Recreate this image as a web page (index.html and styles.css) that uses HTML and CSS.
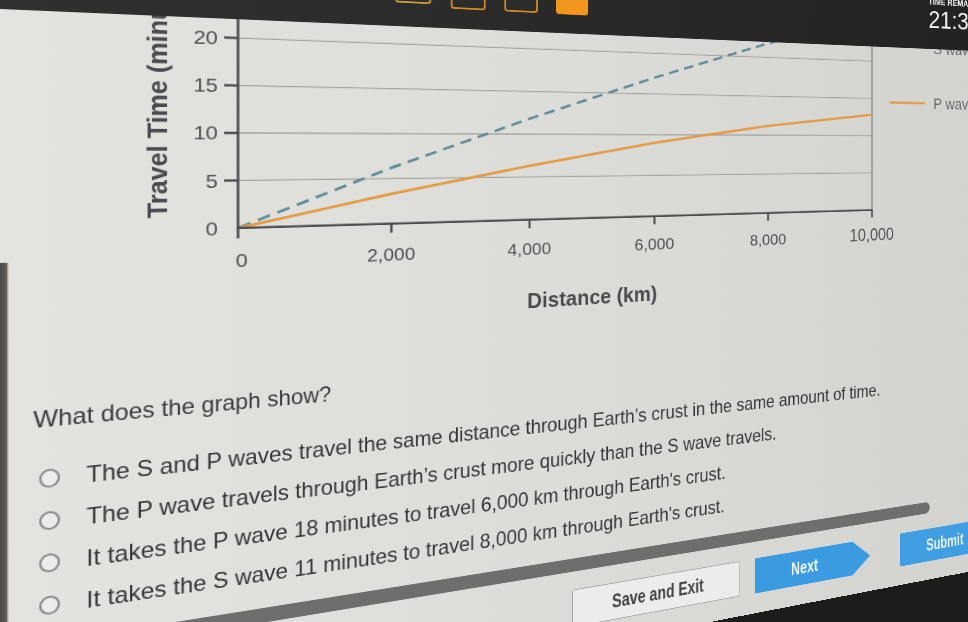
FILE: index.html
```html
<!DOCTYPE html>
<html lang="en">
<head>
<meta charset="utf-8">
<title>Travel time question</title>
<link rel="stylesheet" href="styles.css">
</head>
<body>
<div class="scene">
  <div class="page">
    <header class="topbar">
      <nav class="qnav">
        <span class="qbox qbox-first"></span>
        <span class="qbox"></span>
        <span class="qbox"></span>
        <span class="qbox qbox-current"></span>
      </nav>
      <div class="timer">
        <div class="timer-label">TIME REMAINING</div>
        <div class="timer-value">21:38</div>
      </div>
    </header>
    <main class="content">
      <svg class="chart" width="1200" height="357" viewBox="0 9 1200 357">
        <g class="grid">
          <line x1="214.5" y1="-22" x2="1003" y2="-22"/>
          <line x1="214.5" y1="29.3" x2="1003" y2="29.3"/>
          <line x1="214.5" y1="80.65" x2="1003" y2="80.65"/>
          <line x1="214.5" y1="132" x2="1003" y2="132"/>
          <line x1="214.5" y1="183.35" x2="1003" y2="183.35"/>
        </g>
        <line class="frame" x1="1003" y1="-30" x2="1003" y2="234.7"/>
        <polyline class="s-wave" points="214.5,234.7 372.2,171 529.9,113.5 687.6,60.1 845.3,10.8 1003,-27"/>
        <polyline class="p-wave" points="214.5,234.7 372.2,200.8 529.9,170 687.6,142.3 845.3,119.7 1003,103.2"/>
        <g class="axis">
          <line x1="214.5" y1="-30" x2="214.5" y2="246"/>
          <line x1="213" y1="234.7" x2="1004" y2="234.7"/>
          <line x1="201" y1="29.3" x2="214.5" y2="29.3"/>
          <line x1="201" y1="80.65" x2="214.5" y2="80.65"/>
          <line x1="201" y1="132" x2="214.5" y2="132"/>
          <line x1="201" y1="183.35" x2="214.5" y2="183.35"/>
          <line x1="372.2" y1="234.7" x2="372.2" y2="245"/>
          <line x1="529.9" y1="234.7" x2="529.9" y2="245"/>
          <line x1="687.6" y1="234.7" x2="687.6" y2="245"/>
          <line x1="845.3" y1="234.7" x2="845.3" y2="245"/>
          <line x1="1003" y1="234.7" x2="1003" y2="245"/>
        </g>
        <g class="tick-y">
          <text x="195" y="36.8">20</text>
          <text x="195" y="88.15">15</text>
          <text x="195" y="139.5">10</text>
          <text x="195" y="190.85">5</text>
          <text x="195" y="242.2">0</text>
        </g>
        <g class="tick-x">
          <text x="218" y="277.5">0</text>
          <text x="372.2" y="277.5">2,000</text>
          <text x="529.9" y="277.5">4,000</text>
          <text x="687.6" y="277.5">6,000</text>
          <text x="845.3" y="277.5">8,000</text>
          <text class="tick-wide" x="1003" y="277.5">10,000</text>
        </g>
        <text class="axis-title" x="609" y="341" text-anchor="middle">Distance (km)</text>
        <text class="axis-title axis-title-y" transform="translate(147 222) rotate(-90)">Travel Time (minutes)</text>
        <g class="legend">
          <line class="s-wave" x1="1031" y1="4" x2="1089" y2="4"/>
          <text x="1103" y="16">S wave</text>
          <line class="p-wave" x1="1031" y1="86" x2="1089" y2="86"/>
          <text x="1103" y="94">P wave</text>
        </g>
      </svg>
      <p class="question"><span class="narrow">What does the graph show?</span></p>
      <ul class="options">
        <li class="option"><span class="radio"></span><span class="option-text">The S and P waves travel the same distance through Earth’s crust in the same amount of time.</span></li>
        <li class="option"><span class="radio"></span><span class="option-text">The P wave travels through Earth’s crust more quickly than the S wave travels.</span></li>
        <li class="option"><span class="radio"></span><span class="option-text">It takes the P wave 18 minutes to travel 6,000 km through Earth's crust.</span></li>
        <li class="option"><span class="radio"></span><span class="option-text">It takes the S wave 11 minutes to travel 8,000 km through Earth's crust.</span></li>
      </ul>
      <div class="divider"></div>
      <div class="actions">
        <button class="btn btn-save"><span class="btn-label">Save and Exit</span></button>
        <button class="btn btn-next"><span class="btn-label">Next</span></button>
        <button class="btn btn-submit"><span class="btn-label">Submit</span></button>
      </div>
    </main>
  </div>
</div>
</body>
</html>
```
FILE: styles.css
```css
* { box-sizing: border-box; }

html, body {
  margin: 0;
  padding: 0;
}

body {
  width: 968px;
  height: 622px;
  overflow: hidden;
  background: #1c1c1c;
  font-family: "Liberation Sans", Arial, sans-serif;
}

.scene {
  width: 968px;
  height: 622px;
  overflow: hidden;
  background: #1c1c1c;
  perspective: 1152px;
  perspective-origin: 0 145px;
}

.page {
  width: 1200px;
  margin-top: -150px;
  display: flex;
  flex-direction: column;
  transform-origin: 0 0;
  transform: rotateY(20deg) scaleX(1.277);
}

/* ---------- top bar ---------- */
.topbar {
  height: 159px;
  background: linear-gradient(90deg, #303030, #222222);
  display: flex;
  align-items: flex-end;
  padding-bottom: 23px;
}

.qnav {
  display: flex;
  gap: 22px;
  margin-left: 376px;
}

.qbox {
  width: 40px;
  height: 36px;
  border: 2px solid #d98a22;
  border-radius: 4px;
  background: #2c2c2c;
}

.qbox-first {
  border-color: #c9a23a;
  height: 32px;
  margin-bottom: 4px;
}

.qbox-current {
  background: #f2951c;
  border-color: #f2951c;
}

.timer {
  margin-left: auto;
  width: 105px;
  margin-bottom: 2px;
  color: #f4f4f4;
  white-space: nowrap;
}

.timer-label {
  font-size: 12px;
  font-weight: bold;
  line-height: 14px;
}

.timer-value {
  font-size: 35px;
  line-height: 35px;
}

/* ---------- content ---------- */
.content {
  height: 751px;
  background:
    linear-gradient(90deg, #4e4c4a 0, #5c5a58 5px, #8a7468 6px, transparent 7px) 0 254px / 8px 100% no-repeat,
    linear-gradient(90deg, #e3e3e0 0%, #dcdcd9 45%, #d2d2cf 100%);
}

.chart {
  display: block;
  font-family: "Liberation Sans", Arial, sans-serif;
}

.grid line {
  stroke: #a2a2a0;
  stroke-width: 1.3;
}

.frame {
  stroke: #7c7c7c;
  stroke-width: 1.6;
}

.axis line {
  stroke: #4e4e52;
  stroke-width: 2.6;
}

.s-wave {
  fill: none;
  stroke: #5f8c99;
  stroke-width: 3;
  stroke-dasharray: 13 8;
}

.p-wave {
  fill: none;
  stroke: #e69a42;
  stroke-width: 3;
}

.tick-y text {
  font-size: 21px;
  fill: #505050;
  text-anchor: end;
}

.tick-x text {
  font-size: 21px;
  fill: #505050;
  text-anchor: middle;
}

.tick-x .tick-wide {
  font-size: 23px;
}

.axis-title {
  font-size: 25px;
  font-weight: bold;
  fill: #4a4a50;
}

.axis-title-y {
  font-size: 26.5px;
}

.legend text {
  font-size: 22px;
  fill: #6a6a6a;
}

.question {
  margin: 44px 0 0 28px;
  font-size: 24px;
  line-height: 26px;
  color: #3b3b3b;
  white-space: nowrap;
}

.narrow {
  display: inline-block;
  transform-origin: 0 50%;
  transform: scaleX(0.9375);
}

.options {
  list-style: none;
  margin: 26px 0 0 28px;
  padding: 0;
}

.option {
  height: 43px;
  display: flex;
  align-items: center;
}

.radio {
  flex: none;
  width: 18px;
  height: 19px;
  margin-left: 5px;
  margin-right: 23px;
  border: 2px solid #8a8a8a;
  border-radius: 50%;
  background: #ececea;
}

.option-text {
  display: inline-block;
  font-size: 24px;
  line-height: 26px;
  color: #363636;
  white-space: nowrap;
  transform-origin: 0 50%;
  transform: scaleX(0.9375);
}

.divider {
  margin-top: 16px;
  width: 1097px;
  height: 16px;
  border-radius: 8px;
  background: #6e6e6e;
}

.actions {
  margin-top: 22px;
  padding-left: 582px;
  display: flex;
  gap: 21px;
}

.btn {
  height: 46px;
  border: none;
  padding: 0;
  margin: 0;
  display: flex;
  align-items: center;
  justify-content: center;
  font-family: "Liberation Sans", Arial, sans-serif;
  font-weight: bold;
  font-size: 24px;
}

.btn-label {
  display: inline-block;
  transform: scaleX(0.78);
}

.btn-save {
  width: 223px;
  background: #ececea;
  border: 1px solid #a4a4a4;
  border-radius: 3px;
  color: #444;
}

.btn-next {
  width: 174px;
  padding-right: 27px;
  background: #3b9be0;
  color: #f2f6fa;
  clip-path: polygon(0 0, 84% 0, 100% 50%, 84% 100%, 0 100%);
}

.btn-submit {
  width: 150px;
  margin-left: 27px;
  background: #3f9fe2;
  color: #e6eef6;
  border-radius: 3px;
}
```
